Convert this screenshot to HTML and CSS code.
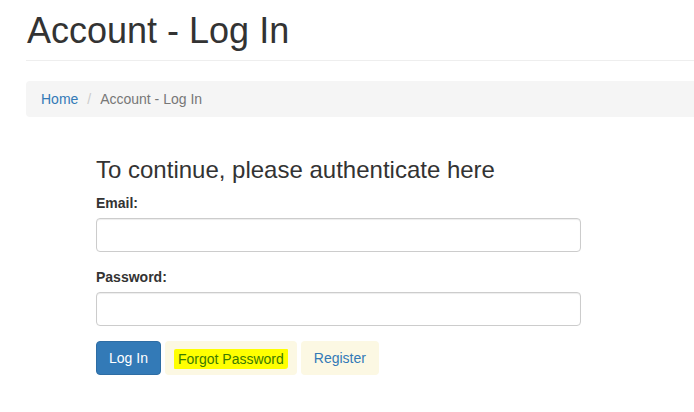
FILE: index.html
```html
<!DOCTYPE html>
<html lang="en">
<head>
  <meta charset="UTF-8">
  <meta name="viewport" content="width=device-width, initial-scale=1.0">
  <title>Account - Log In</title>
  <link rel="stylesheet" href="styles.css">
</head>
<body>
  <div class="page">
    <div class="page-header">
      <h1>Account - Log In</h1>
    </div>

    <ol class="breadcrumb">
      <li><a href="#">Home</a></li>
      <li class="active">Account - Log In</li>
    </ol>

    <form class="login-form">
      <h3>To continue, please authenticate here</h3>
      <div class="form-group">
        <label for="email">Email:</label>
        <input type="text" id="email" class="form-control">
      </div>
      <div class="form-group">
        <label for="password">Password:</label>
        <input type="password" id="password" class="form-control">
      </div>
      <div class="actions">
        <button type="button" class="btn btn-primary">Log In</button>
        <a href="#" class="btn btn-soft"><span class="marker">Forgot Password</span></a>
        <a href="#" class="btn btn-soft">Register</a>
      </div>
    </form>
  </div>
</body>
</html>
```

FILE: styles.css
```css
body {
  margin: 0;
  background-color: #fff;
  color: #333;
  font-family: "Liberation Sans", Arial, sans-serif;
  font-size: 14px;
  line-height: 20px;
}
a {
  color: #337ab7;
  text-decoration: none;
}
.page {
  padding: 11px 0 0 26px;
}
.page-header {
  padding-bottom: 9px;
  border-bottom: 1px solid #eee;
}
.page-header h1 {
  margin: 0;
  padding-left: 1px;
  font-size: 36px;
  font-weight: 500;
  line-height: 1.1;
}
.breadcrumb {
  display: flex;
  list-style: none;
  margin: 20px 0 0;
  padding: 8px 15px;
  background-color: #f5f5f5;
  border-radius: 4px 0 0 4px;
}
.breadcrumb li + li::before {
  content: "/\00a0";
  color: #ccc;
  padding: 0 5px 0 9px;
}
.breadcrumb .active {
  color: #777;
}
.login-form {
  width: 485px;
  margin-left: 70px;
}
.login-form h3 {
  margin: 40px 0 10px;
  font-size: 24px;
  font-weight: 500;
  line-height: 1.1;
}
.form-group {
  margin-bottom: 15px;
}
.form-group label {
  display: inline-block;
  margin-bottom: 5px;
  font-weight: bold;
}
.form-control {
  display: block;
  box-sizing: border-box;
  width: 100%;
  height: 34px;
  padding: 6px 12px;
  border: 1px solid #ccc;
  border-radius: 4px;
  box-shadow: inset 0 1px 1px rgba(0, 0, 0, .075);
  font: inherit;
}
.actions {
  display: flex;
  gap: 4px;
}
.btn {
  display: inline-block;
  height: 34px;
  box-sizing: border-box;
  padding: 6px 12px;
  border: 1px solid transparent;
  border-radius: 4px;
  font: inherit;
  line-height: 20px;
}
.btn-primary {
  background-color: #337ab7;
  border-color: #2e6da4;
  color: #fff;
}
.btn-soft {
  background-color: #fcf8e3;
  color: #337ab7;
}
.marker {
  display: inline-block;
  margin: 1px -4px 0;
  padding: 0 4px;
  background-color: #ffff00;
  color: #3b7a00;
  border-radius: 2px 1px 3px 1px;
}
```
